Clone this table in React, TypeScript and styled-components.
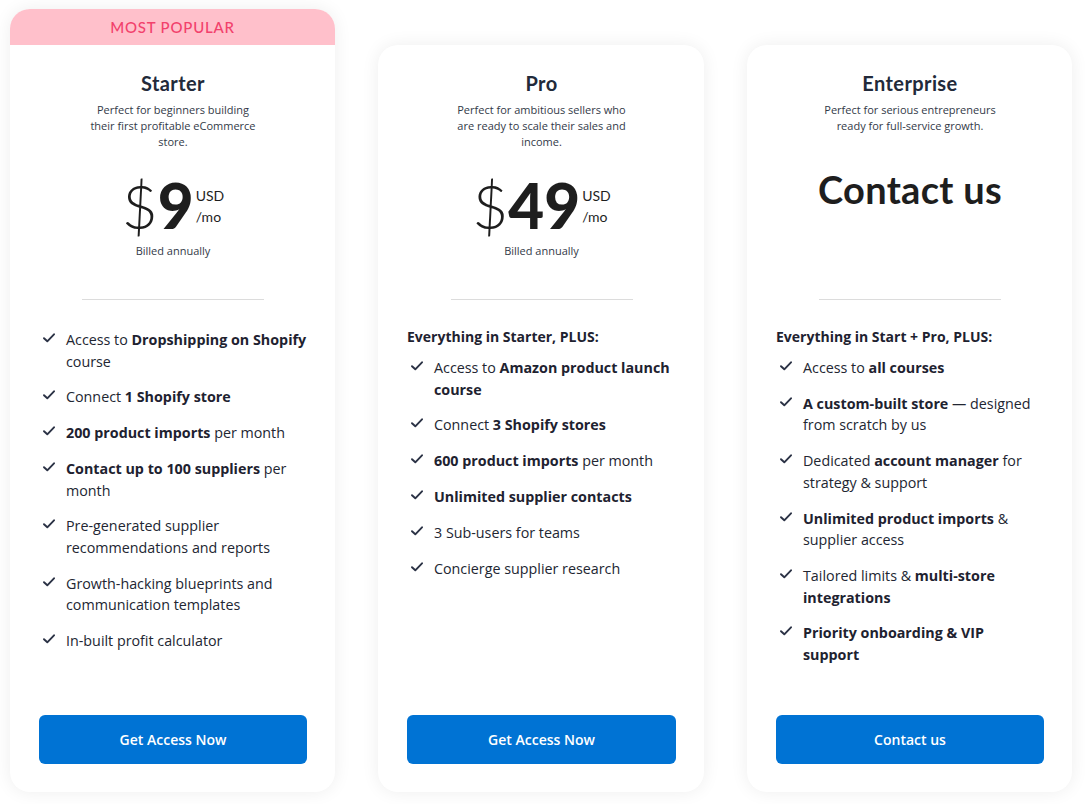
import styled, { createGlobalStyle } from "styled-components";

const GlobalStyle = createGlobalStyle`
  html, body {
    margin: 0;
    padding: 0;
    background: #ffffff;
  }
  body {
    font-family: "Open Sans", "Liberation Sans", sans-serif;
    color: #222222;
  }
`;

type Feature = { parts: Array<string | { b: string }> };

type Plan = {
  name: string;
  description: string;
  price?: string;
  contact?: boolean;
  lead?: string;
  features: Feature[];
  cta: string;
  popular?: boolean;
};

const plans: Plan[] = [
  {
    name: "Starter",
    description: "Perfect for beginners building their first profitable eCommerce store.",
    price: "9",
    popular: true,
    features: [
      { parts: ["Access to ", { b: "Dropshipping on Shopify" }, " course"] },
      { parts: ["Connect ", { b: "1 Shopify store" }] },
      { parts: [{ b: "200 product imports" }, " per month"] },
      { parts: [{ b: "Contact up to 100 suppliers" }, " per month"] },
      { parts: ["Pre-generated supplier recommendations and reports"] },
      { parts: ["Growth-hacking blueprints and communication templates"] },
      { parts: ["In-built profit calculator"] },
    ],
    cta: "Get Access Now",
  },
  {
    name: "Pro",
    description: "Perfect for ambitious sellers who are ready to scale their sales and income.",
    price: "49",
    lead: "Everything in Starter, PLUS:",
    features: [
      { parts: ["Access to ", { b: "Amazon product launch course" }] },
      { parts: ["Connect ", { b: "3 Shopify stores" }] },
      { parts: [{ b: "600 product imports" }, " per month"] },
      { parts: [{ b: "Unlimited supplier contacts" }] },
      { parts: ["3 Sub-users for teams"] },
      { parts: ["Concierge supplier research"] },
    ],
    cta: "Get Access Now",
  },
  {
    name: "Enterprise",
    description: "Perfect for serious entrepreneurs ready for full-service growth.",
    contact: true,
    lead: "Everything in Start + Pro, PLUS:",
    features: [
      { parts: ["Access to ", { b: "all courses" }] },
      { parts: [{ b: "A custom-built store" }, " \u2014 designed from scratch by us"] },
      { parts: ["Dedicated ", { b: "account manager" }, " for strategy & support"] },
      { parts: [{ b: "Unlimited product imports" }, " & supplier access"] },
      { parts: ["Tailored limits & ", { b: "multi-store integrations" }] },
      { parts: [{ b: "Priority onboarding & VIP support" }] },
    ],
    cta: "Contact us",
  },
];

function Check() {
  return (
    <svg width="12" height="10" viewBox="0 0 12 10" fill="none">
      <path d="M1 5.2 L4.3 8.3 L11 1.3" stroke="#2b3245" strokeWidth="1.9" strokeLinecap="round" strokeLinejoin="round" />
    </svg>
  );
}

function PlanCard({ plan }: { plan: Plan }) {
  return (
    <Column $popular={!!plan.popular}>
      <Card>
        {plan.popular && <Badge>MOST POPULAR</Badge>}
        <Body>
          <Title>{plan.name}</Title>
          <Description>{plan.description}</Description>
          <PriceArea>
            {plan.contact ? (
              <ContactPrice>Contact us</ContactPrice>
            ) : (
              <>
                <PriceRow>
                  <Dollar>$</Dollar>
                  <Amount>{plan.price}</Amount>
                  <Unit>
                    <span>USD</span>
                    <span>/mo</span>
                  </Unit>
                </PriceRow>
                <Billed>Billed annually</Billed>
              </>
            )}
          </PriceArea>
          <Divider />
          <Features>
            {plan.lead && <Lead>{plan.lead}</Lead>}
            <List $offset={!plan.lead}>
              {plan.features.map((f, i) => (
                <Item key={i}>
                  <CheckWrap>
                    <Check />
                  </CheckWrap>
                  <ItemText>
                    {f.parts.map((p, j) => (typeof p === "string" ? p : <b key={j}>{p.b}</b>))}
                  </ItemText>
                </Item>
              ))}
            </List>
          </Features>
          <Button>{plan.cta}</Button>
        </Body>
      </Card>
    </Column>
  );
}

export default function App() {
  return (
    <>
      <GlobalStyle />
      <Page>
        {plans.map((p) => (
          <PlanCard key={p.name} plan={p} />
        ))}
      </Page>
    </>
  );
}

const Page = styled.div`
  display: grid;
  grid-template-columns: 325px 326px 325px;
  column-gap: 43px;
  padding: 9px 13px 12px 10px;
  height: 804px;
  box-sizing: border-box;
`;

const Column = styled.div<{ $popular: boolean }>`
  display: flex;
  flex-direction: column;
  padding-top: ${({ $popular }) => ($popular ? "0" : "36px")};
`;

const Card = styled.div`
  flex: 1;
  display: flex;
  flex-direction: column;
  background: #ffffff;
  border-radius: 20px;
  overflow: hidden;
  box-shadow: 0 0 18px rgba(0, 0, 0, 0.07);
`;

const Badge = styled.div`
  height: 36px;
  background: #ffc0cb;
  color: #f2416c;
  font-family: "Lato", "Open Sans", sans-serif;
  font-size: 15px;
  font-weight: 500;
  letter-spacing: 0.8px;
  display: flex;
  align-items: center;
  justify-content: center;
`;

const Body = styled.div`
  flex: 1;
  display: flex;
  flex-direction: column;
  align-items: center;
  padding: 26px 28px 28px 29px;
`;

const Title = styled.div`
  font-family: "Lato", "Open Sans", sans-serif;
  font-weight: 700;
  font-size: 20px;
  line-height: 24px;
  color: #222a3a;
  letter-spacing: 0.4px;
`;

const Description = styled.div`
  margin-top: 7px;
  width: 174px;
  min-height: 48px;
  font-size: 11px;
  line-height: 16px;
  text-align: center;
  color: #333a48;
`;

const PriceArea = styled.div`
  height: 104px;
  margin-top: 22px;
  display: flex;
  flex-direction: column;
  align-items: center;
`;

const PriceRow = styled.div`
  display: flex;
  align-items: flex-start;
  color: #1e1e1e;
  font-family: "Lato", "Open Sans", sans-serif;
`;

const Dollar = styled.span`
  font-size: 62px;
  font-weight: 300;
  line-height: 66px;
`;

const Amount = styled.span`
  font-size: 62px;
  font-weight: 900;
  line-height: 66px;
`;

const Unit = styled.span`
  display: flex;
  flex-direction: column;
  font-size: 14px;
  line-height: 21px;
  margin-top: 13px;
  margin-left: 2px;
`;

const Billed = styled.div`
  margin-top: 5px;
  font-size: 11px;
  line-height: 16px;
  color: #333a48;
`;

const ContactPrice = styled.div`
  margin-top: -5px;
  font-family: "Lato", "Open Sans", sans-serif;
  font-weight: 700;
  font-size: 38px;
  line-height: 44px;
  color: #1e1e1e;
  letter-spacing: 0.3px;
`;

const Divider = styled.div`
  width: 182px;
  height: 1px;
  background: #dcdcdc;
  margin-top: 23px;
`;

const Features = styled.div`
  align-self: stretch;
  flex: 1;
  margin-top: 27px;
`;

const Lead = styled.div`
  font-size: 14px;
  font-weight: 700;
  line-height: 20px;
  color: #1e2230;
  margin-bottom: 10px;
`;

const List = styled.ul<{ $offset: boolean }>`
  list-style: none;
  margin: ${({ $offset }) => ($offset ? "2px" : "0")} 0 0;
  padding: 0;
  display: flex;
  flex-direction: column;
  gap: 14.2px;
`;

const Item = styled.li`
  display: flex;
  align-items: flex-start;
  font-size: 14.3px;
  line-height: 21.6px;
  color: #222632;
  padding-right: 0.5px;
`;

const ItemText = styled.span`
  flex: 1;

  b {
    font-weight: 700;
    color: #1e2230;
  }
`;

const CheckWrap = styled.span`
  flex: 0 0 27px;
  display: flex;
  justify-content: flex-start;
  padding-left: 4px;
  padding-top: 4px;
  box-sizing: border-box;
`;

const Button = styled.button`
  align-self: stretch;
  height: 49px;
  border: none;
  border-radius: 6px;
  background: #0073d4;
  color: #ffffff;
  font-family: "Open Sans", "Liberation Sans", sans-serif;
  font-size: 14px;
  font-weight: 600;
  cursor: pointer;
`;
